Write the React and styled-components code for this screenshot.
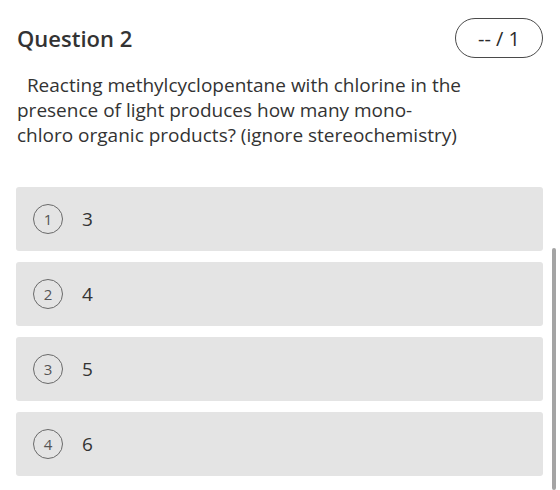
import styled, { createGlobalStyle } from 'styled-components'

const GlobalStyle = createGlobalStyle`
	html, body {
		margin: 0;
		padding: 0;
		background: #ffffff;
	}
	body {
		font-family: 'Open Sans', 'Noto Sans', sans-serif;
		color: #333333;
	}
`

const Page = styled.div`
	position: relative;
	width: 560px;
	height: 490px;
	overflow: hidden;
	padding: 18px 17px 0 16px;
	box-sizing: border-box;
`

const Header = styled.div`
	display: flex;
	align-items: center;
	justify-content: space-between;
	height: 40px;
`

const Title = styled.h2`
	margin: 0 0 0 1px;
	font-size: 22px;
	font-weight: 600;
	color: #333333;
`

const Score = styled.div`
	display: flex;
	align-items: center;
	justify-content: center;
	width: 88px;
	height: 40px;
	box-sizing: border-box;
	border: 1.5px solid #4a4a4a;
	border-radius: 20px;
	font-size: 20px;
	color: #2b2b2b;
`

const Prompt = styled.p`
	margin: 15px 0 0 1px;
	font-size: 19px;
	line-height: 25px;
	color: #333333;
	white-space: pre-wrap;
`

const Choices = styled.div`
	display: flex;
	flex-direction: column;
	gap: 11px;
	margin-top: 39px;
`

const Choice = styled.div`
	display: flex;
	align-items: center;
	gap: 19px;
	height: 64px;
	padding-left: 17px;
	background: #e4e4e4;
	border-radius: 3px;
	font-size: 19px;
	color: #333333;
`

const Badge = styled.span`
	display: flex;
	align-items: center;
	justify-content: center;
	width: 30px;
	height: 30px;
	box-sizing: border-box;
	border: 1.5px solid #6a6a6a;
	border-radius: 50%;
	font-size: 15px;
	color: #555555;
`

const Scrollbar = styled.div`
	position: absolute;
	left: 552px;
	top: 248px;
	width: 4px;
	height: 242px;
	border-radius: 2px;
	background: #a4a4a4;
`

const answers = ['3', '4', '5', '6']

export default function App() {
	return (
		<>
			<GlobalStyle />
			<Page>
				<Header>
					<Title>Question 2</Title>
					<Score>-- / 1</Score>
				</Header>
				<Prompt>
					{'  Reacting methylcyclopentane with chlorine in the'}
					<br />
					{'presence of light produces how many mono-'}
					<br />
					{'chloro organic products? (ignore stereochemistry)'}
				</Prompt>
				<Choices>
					{answers.map((answer, idx) => (
						<Choice key={idx}>
							<Badge>{idx + 1}</Badge>
							{answer}
						</Choice>
					))}
				</Choices>
				<Scrollbar />
			</Page>
		</>
	)
}
